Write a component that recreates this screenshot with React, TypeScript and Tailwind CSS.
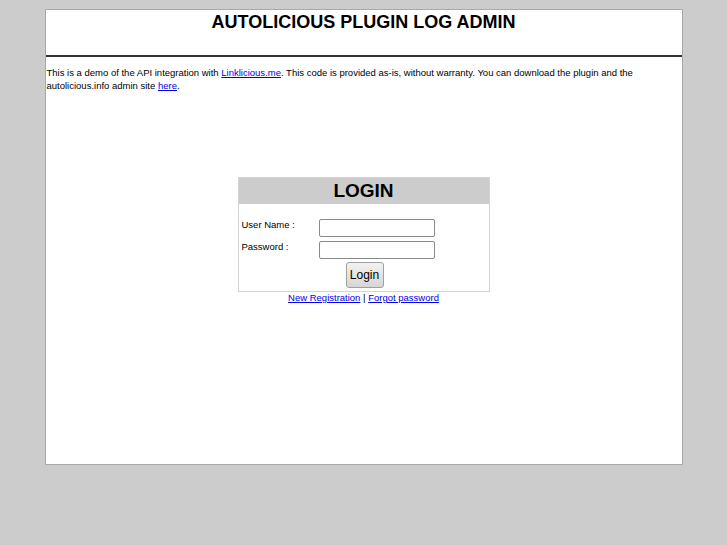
export default function App() {
  return (
    <div className="min-h-[545px] bg-[#cccccc] pt-[9px] font-['Liberation_Sans',Arial,sans-serif] text-black">
      <div className="mx-auto h-[456px] w-[638px] border border-[#a9a9a9] bg-white">
        <div className="h-[45px] pt-[1px] text-center text-[18px] font-bold leading-[22px]">
          AUTOLICIOUS PLUGIN LOG ADMIN
        </div>
        <div className="h-[2px] bg-[#333333]" />
        <p className="mt-[9px] pl-[1px] text-[9.5px] leading-[13px]">
          This is a demo of the API integration with{" "}
          <a href="#" className="text-[#0000ee] underline">
            Linklicious.me
          </a>
          . This code is provided as-is, without warranty. You can download the plugin and the autolicious.info admin site{" "}
          <a href="#" className="text-[#0000ee] underline">
            here
          </a>
          .
        </p>

        <div className="mx-auto mt-[85px] w-[252px]">
          <div className="border border-[#d4d4d4]">
            <div className="h-[26px] bg-[#cccccc] text-center text-[19px] font-bold leading-[26px]">LOGIN</div>
            <div className="px-[3px] pt-[15px] pb-[3px] text-[9.5px]">
              <div className="grid grid-cols-[77px_116px] items-start gap-y-[4px]">
                <label className="leading-[12px]">User Name :</label>
                <input className="h-[18px] rounded-[2px] border border-[#8a8a8a] bg-white" />
                <label className="leading-[12px]">Password :</label>
                <input className="h-[18px] rounded-[2px] border border-[#8a8a8a] bg-white" />
              </div>
              <div className="mt-[3px] flex justify-center pl-[2px]">
                <button className="h-[26px] w-[38px] rounded-[3px] border border-[#a0a0a0] bg-gradient-to-b from-[#f2f2f2] to-[#d6d6d6] text-[12px]">
                  Login
                </button>
              </div>
            </div>
          </div>
          <div className="mt-[0px] text-center text-[9.5px] leading-[12px]">
            <a href="#" className="text-[#0000ee] underline">
              New Registration
            </a>{" "}
            |{" "}
            <a href="#" className="text-[#0000ee] underline">
              Forgot password
            </a>
          </div>
        </div>
      </div>
    </div>
  );
}
